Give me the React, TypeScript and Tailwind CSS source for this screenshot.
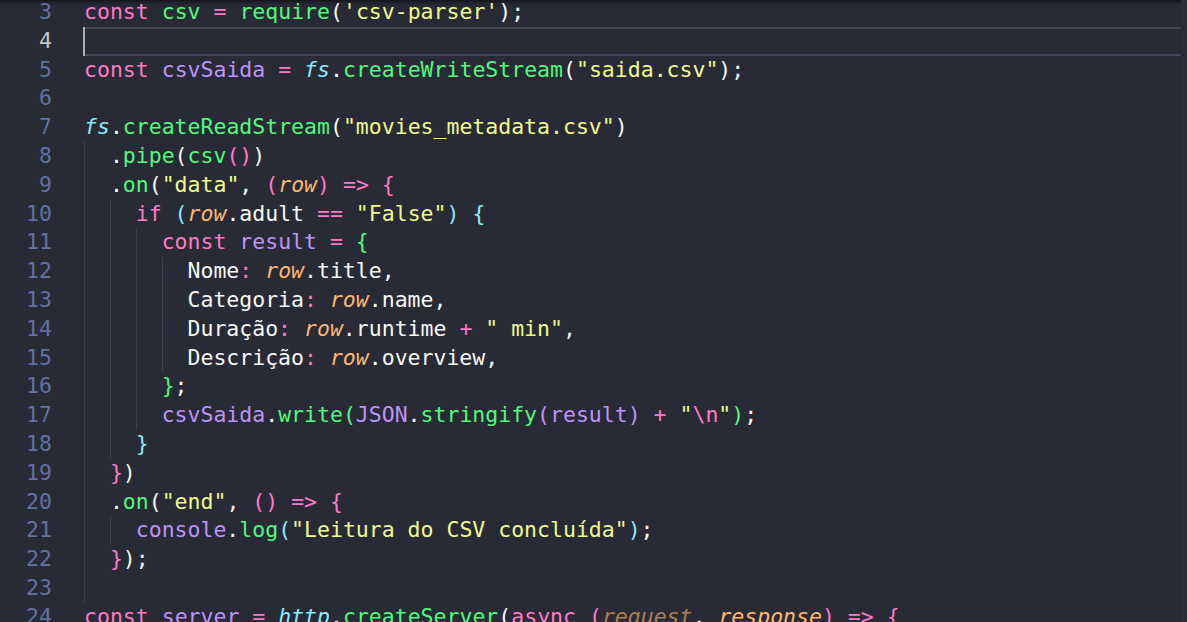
type Tok = [string, string?]

const W = 'text-[#f8f8f2]'
const PK = 'text-[#ff79c6]'
const GR = 'text-[#50fa7b]'
const YL = 'text-[#f1fa8c]'
const PU = 'text-[#bd93f9]'
const CY = 'text-[#8be9fd] italic'
const CB = 'text-[#8be9fd]'
const OR = 'text-[#ffb86c] italic'
const ORF = 'text-[#ffb86c] italic opacity-60'

interface Line {
    n: number
    guides: number
    toks: Tok[]
}

const lines: Line[] = [
    { n: 3, guides: 0, toks: [['const', PK], [' '], ['csv', GR], [' '], ['=', PK], [' '], ['require', GR], ['('], ["'csv-parser'", YL], [')'], [';']] },
    { n: 4, guides: 0, toks: [] },
    { n: 5, guides: 0, toks: [['const', PK], [' '], ['csvSaida', PU], [' '], ['=', PK], [' '], ['fs', CY], ['.'], ['createWriteStream', GR], ['('], ['"saida.csv"', YL], [')'], [';']] },
    { n: 6, guides: 0, toks: [] },
    { n: 7, guides: 0, toks: [['fs', CY], ['.'], ['createReadStream', GR], ['('], ['"movies_metadata.csv"', YL], [')']] },
    { n: 8, guides: 1, toks: [['.'], ['pipe', GR], ['('], ['csv', GR], ['()', PK], [')']] },
    { n: 9, guides: 1, toks: [['.'], ['on', GR], ['('], ['"data"', YL], [', '], ['(', PK], ['row', OR], [')', PK], [' '], ['=>', PK], [' '], ['{', PK]] },
    { n: 10, guides: 2, toks: [['if', PK], [' '], ['(', CB], ['row', OR], ['.adult'], [' '], ['==', PK], [' '], ['"False"', YL], [')', CB], [' '], ['{', CB]] },
    { n: 11, guides: 3, toks: [['const', PK], [' '], ['result', PU], [' '], ['=', PK], [' '], ['{', GR]] },
    { n: 12, guides: 4, toks: [['Nome'], [':', PK], [' '], ['row', OR], ['.title,']] },
    { n: 13, guides: 4, toks: [['Categoria'], [':', PK], [' '], ['row', OR], ['.name,']] },
    { n: 14, guides: 4, toks: [['Duração'], [':', PK], [' '], ['row', OR], ['.runtime'], [' '], ['+', PK], [' '], ['" min"', YL], [',']] },
    { n: 15, guides: 4, toks: [['Descrição'], [':', PK], [' '], ['row', OR], ['.overview,']] },
    { n: 16, guides: 3, toks: [['}', GR], [';']] },
    { n: 17, guides: 3, toks: [['csvSaida', PU], ['.'], ['write', GR], ['(', GR], ['JSON', PU], ['.'], ['stringify', GR], ['(', PU], ['result', PU], [')', PU], [' '], ['+', PK], [' '], ['"', YL], ['\\n', PK], ['"', YL], [')', GR], [';']] },
    { n: 18, guides: 2, toks: [['}', CB]] },
    { n: 19, guides: 1, toks: [['}', PK], [')']] },
    { n: 20, guides: 1, toks: [['.'], ['on', GR], ['('], ['"end"', YL], [', '], ['()', PK], [' '], ['=>', PK], [' '], ['{', PK]] },
    { n: 21, guides: 2, toks: [['console', PU], ['.'], ['log', GR], ['(', CB], ['"Leitura do CSV concluída"', YL], [')', CB], [';']] },
    { n: 22, guides: 1, toks: [['}', PK], [')'], [';']] },
    { n: 23, guides: 1, toks: [] },
    { n: 24, guides: 0, toks: [['const', PK], [' '], ['server', PU], [' '], ['=', PK], [' '], ['http', CY], ['.'], ['createServer', GR], ['('], ['async', PK], [' '], ['(', PK], ['request', ORF], [', '], ['response', OR], [')', PK], [' '], ['=>', PK], [' '], ['{', PK]] },
]

const CodeLine = ({ line }: { line: Line }) => {
    const active = line.n === 4
    return (
        <div className="flex h-[28.8px] leading-[28.8px]">
            <div className={`w-[52px] shrink-0 text-right ${active ? 'text-[#c6c6c6]' : 'text-[#6272a4]'}`}>{line.n}</div>
            <div className={`ml-[32px] flex flex-1 ${active ? 'border-y-2 border-[#44475a]' : ''}`}>
                {active && <div className="-ml-px -my-[2px] w-[2px] bg-[#aeafad]" />}
                {Array.from({ length: line.guides }).map((_, i) => (
                    <div key={i} className="w-[2ch] shrink-0 border-l border-[#3b3e4f]" />
                ))}
                <span className="whitespace-pre">
                    {line.toks.map((t, i) => (
                        <span key={i} className={t[1] ?? W}>{t[0]}</span>
                    ))}
                </span>
            </div>
        </div>
    )
}

const App = () => {
    return (
        <div className="flex h-[622px] w-[1187px] overflow-hidden bg-[#282a36] font-['DejaVu_Sans_Mono',monospace] text-[21.5px] text-[#f8f8f2]">
            <div className="flex-1 overflow-hidden shadow-[inset_0_6px_6px_-6px_#000]">
                <div className="-mt-[2px]">
                    {lines.map(l => <CodeLine key={l.n} line={l} />)}
                </div>
            </div>
            <div className="w-[6px] shrink-0 bg-[#2a2c38]" />
        </div>
    )
}

export default App
